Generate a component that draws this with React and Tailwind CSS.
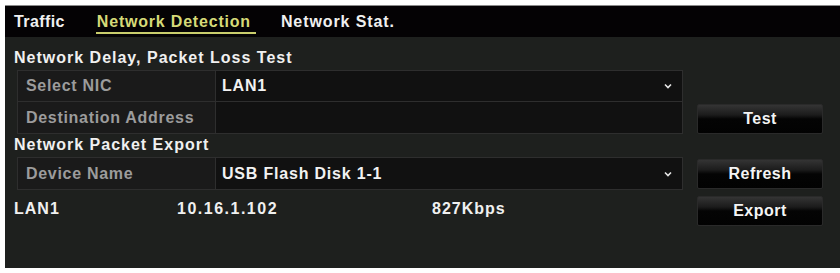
import React from "react";

const font = { fontFamily: '"Liberation Sans", Arial, sans-serif' };

function Chevron() {
  return (
    <svg width="8" height="6" viewBox="0 0 8 6" className="mr-[10px]">
      <path d="M1 1.5 L4 4.5 L7 1.5" stroke="#e8e8e8" strokeWidth="1.6" fill="none" />
    </svg>
  );
}

function Row({ label, value, select, last }) {
  return (
    <div className={`flex h-[31px] ${last ? "" : "border-b border-[#2e2e2e]"}`}>
      <div className="w-[198px] flex items-center pl-[8px] bg-[#1a1a1a] border-r border-[#2e2e2e] text-[#9c9c9c] tracking-[0.7px]">
        {label}
      </div>
      <div className="flex-1 flex items-center justify-between pl-[6px] bg-[#111111] text-[#f2f2f2] tracking-[0.8px]">
        <span>{value}</span>
        {select && <Chevron />}
      </div>
    </div>
  );
}

function Btn({ children }) {
  return (
    <button className="w-[126px] h-[30px] rounded-[2px] border border-[#2a2a2a] bg-[linear-gradient(#343434_0%,#1c1c1c_35%,#040404_50%,#020202_100%)] text-[#f4f4f4] text-[16px] font-bold tracking-[0.5px]">
      {children}
    </button>
  );
}

export default function App() {
  return (
    <div className="w-[840px] h-[273px] bg-white pt-[5px] pl-[5px]" style={font}>
      <div className="h-[263px] bg-[#1e201e] border-t border-[#8a8a8a] flex flex-col text-[16px] font-bold">
        {/* tabs */}
        <div className="h-[31px] bg-[#040204] flex items-end pl-[9px]">
          <div className="h-full flex items-center text-[#f0f0f0] tracking-[0.4px] pr-[31px]">Traffic</div>
          <div className="h-full flex items-center relative text-[#d6da78] tracking-[0.8px] px-[1px] mr-[29px]">
            Network Detection
            <div className="absolute left-0 right-[-4px] bottom-[3px] h-[2px] bg-[#c9cd6c]" />
          </div>
          <div className="h-full flex items-center text-[#f0f0f0] tracking-[0.9px]">Network Stat.</div>
        </div>

        <div className="flex flex-col pl-[9px] pr-[17px] pt-[9px]">
          <div className="h-[24px] flex items-center text-[#f0f0f0] tracking-[1px]">
            Network Delay, Packet Loss Test
          </div>
          <div className="flex items-end gap-[14px] pl-[3px]">
            <div className="w-[666px] border border-[#2e2e2e]">
              <Row label="Select NIC" value="LAN1" select />
              <Row label="Destination Address" value="" last />
            </div>
            <Btn>Test</Btn>
          </div>

          <div className="h-[24px] flex items-center text-[#f0f0f0] tracking-[1px] -mt-[1px]">
            Network Packet Export
          </div>
          <div className="flex items-center gap-[14px] pl-[3px]">
            <div className="w-[666px] border border-[#2e2e2e]">
              <Row label="Device Name" value="USB Flash Disk 1-1" select last />
            </div>
            <Btn>Refresh</Btn>
          </div>

          <div className="flex items-start justify-between mt-[6px]">
            <div className="flex text-[#f0f0f0] tracking-[1px] pt-[1px]">
              <span className="w-[163px]">LAN1</span>
              <span className="w-[255px] tracking-[1.5px]">10.16.1.102</span>
              <span>827Kbps</span>
            </div>
            <Btn>Export</Btn>
          </div>
        </div>
      </div>
    </div>
  );
}
